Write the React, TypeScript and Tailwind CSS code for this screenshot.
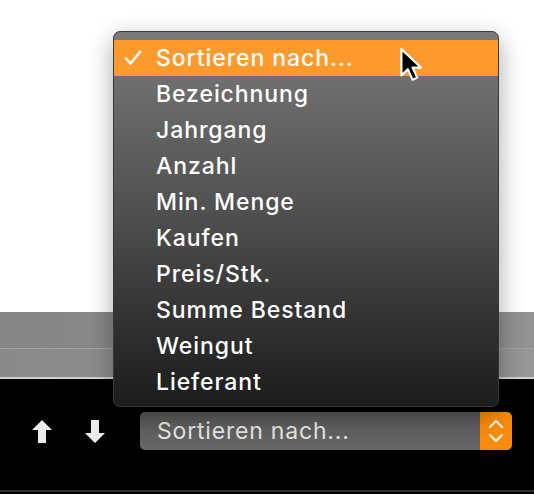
import React from "react";

const items = [
  "Sortieren nach...",
  "Bezeichnung",
  "Jahrgang",
  "Anzahl",
  "Min. Menge",
  "Kaufen",
  "Preis/Stk.",
  "Summe Bestand",
  "Weingut",
  "Lieferant",
];

export default function App() {
  return (
    <div className="relative w-[534px] h-[494px] overflow-hidden bg-black" style={{ fontFamily: "Inter, 'Noto Sans', sans-serif" }}>
      {/* background flow */}
      <div className="flex flex-col h-full">
        <div className="h-[312px] bg-white" />
        <div className="h-[36px] bg-gradient-to-r from-[#858585] to-[#929292]" />
        <div className="h-px bg-[#a2a2a2]" />
        <div className="h-[28px] bg-gradient-to-r from-[#8a8a8a] to-[#969696]" />
        <div className="h-[2px] bg-[#d2d2d2]" />
        <div className="flex-1 bg-black flex flex-col">
          <div className="h-[33px]" />
          <div className="flex items-center h-[38px]">
            <div className="w-[32px]" />
            <svg width="20" height="23" viewBox="0 0 20 23">
              <path d="M10 0 L20 10 L14 10 L14 23 L6 23 L6 10 L0 10 Z" fill="#ececec" />
            </svg>
            <div className="w-[33px]" />
            <svg width="20" height="23" viewBox="0 0 20 23">
              <path d="M6 0 L14 0 L14 13 L20 13 L10 23 L0 13 L6 13 Z" fill="#ececec" />
            </svg>
            <div className="w-[35px]" />
            <div className="flex h-[38px] w-[372px] rounded-[5px] overflow-hidden">
              <div className="flex-1 flex items-center pl-[17px] bg-gradient-to-b from-[#5a5a5a] to-[#676767] text-[#e4e4e4] text-[23px] tracking-[0.035em] leading-none">
                Sortieren nach...
              </div>
              <div className="w-[32px] bg-[#fd8b0b] flex items-center justify-center">
                <svg width="16" height="26" viewBox="0 0 16 26">
                  <path d="M2 9 L8 3 L14 9" stroke="#fff2df" strokeWidth="2.4" fill="none" strokeLinecap="round" strokeLinejoin="round" />
                  <path d="M2 17 L8 23 L14 17" stroke="#fff2df" strokeWidth="2.4" fill="none" strokeLinecap="round" strokeLinejoin="round" />
                </svg>
              </div>
            </div>
          </div>
          <div className="flex-1" />
          <div className="h-[2px] bg-[#2e2e2e] mb-[2px]" />
        </div>
      </div>

      {/* menu overlay */}
      <div className="absolute left-[113px] top-[31px] w-[386px] h-[376px] rounded-[7px] border border-[#3a3a3a] bg-gradient-to-b from-[#7a7a7a] via-[#4e4e4e] to-[#1c1c1c] shadow-[0_8px_24px_rgba(0,0,0,0.35)] pt-[8px] overflow-hidden">
        {items.map((it, i) => (
          <div
            key={it}
            className={
              i === 0
                ? "relative h-[36px] flex items-center pl-[42px] bg-[#fe9a2c] text-white text-[23px] tracking-[0.04em] font-medium leading-none"
                : "relative h-[36px] flex items-center pl-[42px] text-white text-[23px] tracking-[0.04em] font-medium leading-none"
            }
          >
            {i === 0 && (
              <svg className="absolute left-[10px] top-[10px]" width="18" height="16" viewBox="0 0 18 16">
                <path d="M2 8.5 L6.5 13.5 L16 2" stroke="#fff" strokeWidth="2.6" fill="none" strokeLinecap="round" strokeLinejoin="round" />
              </svg>
            )}
            {it}
          </div>
        ))}
      </div>

      {/* cursor */}
      <svg className="absolute left-[398px] top-[47px]" width="28" height="38" viewBox="0 0 26 36">
        <path d="M3 2 L3 27 L9 21 L13.5 31 L18 29 L13.5 19.5 L21.5 19.5 Z" fill="#000" stroke="#fff" strokeWidth="2" strokeLinejoin="round" />
      </svg>
    </div>
  );
}
